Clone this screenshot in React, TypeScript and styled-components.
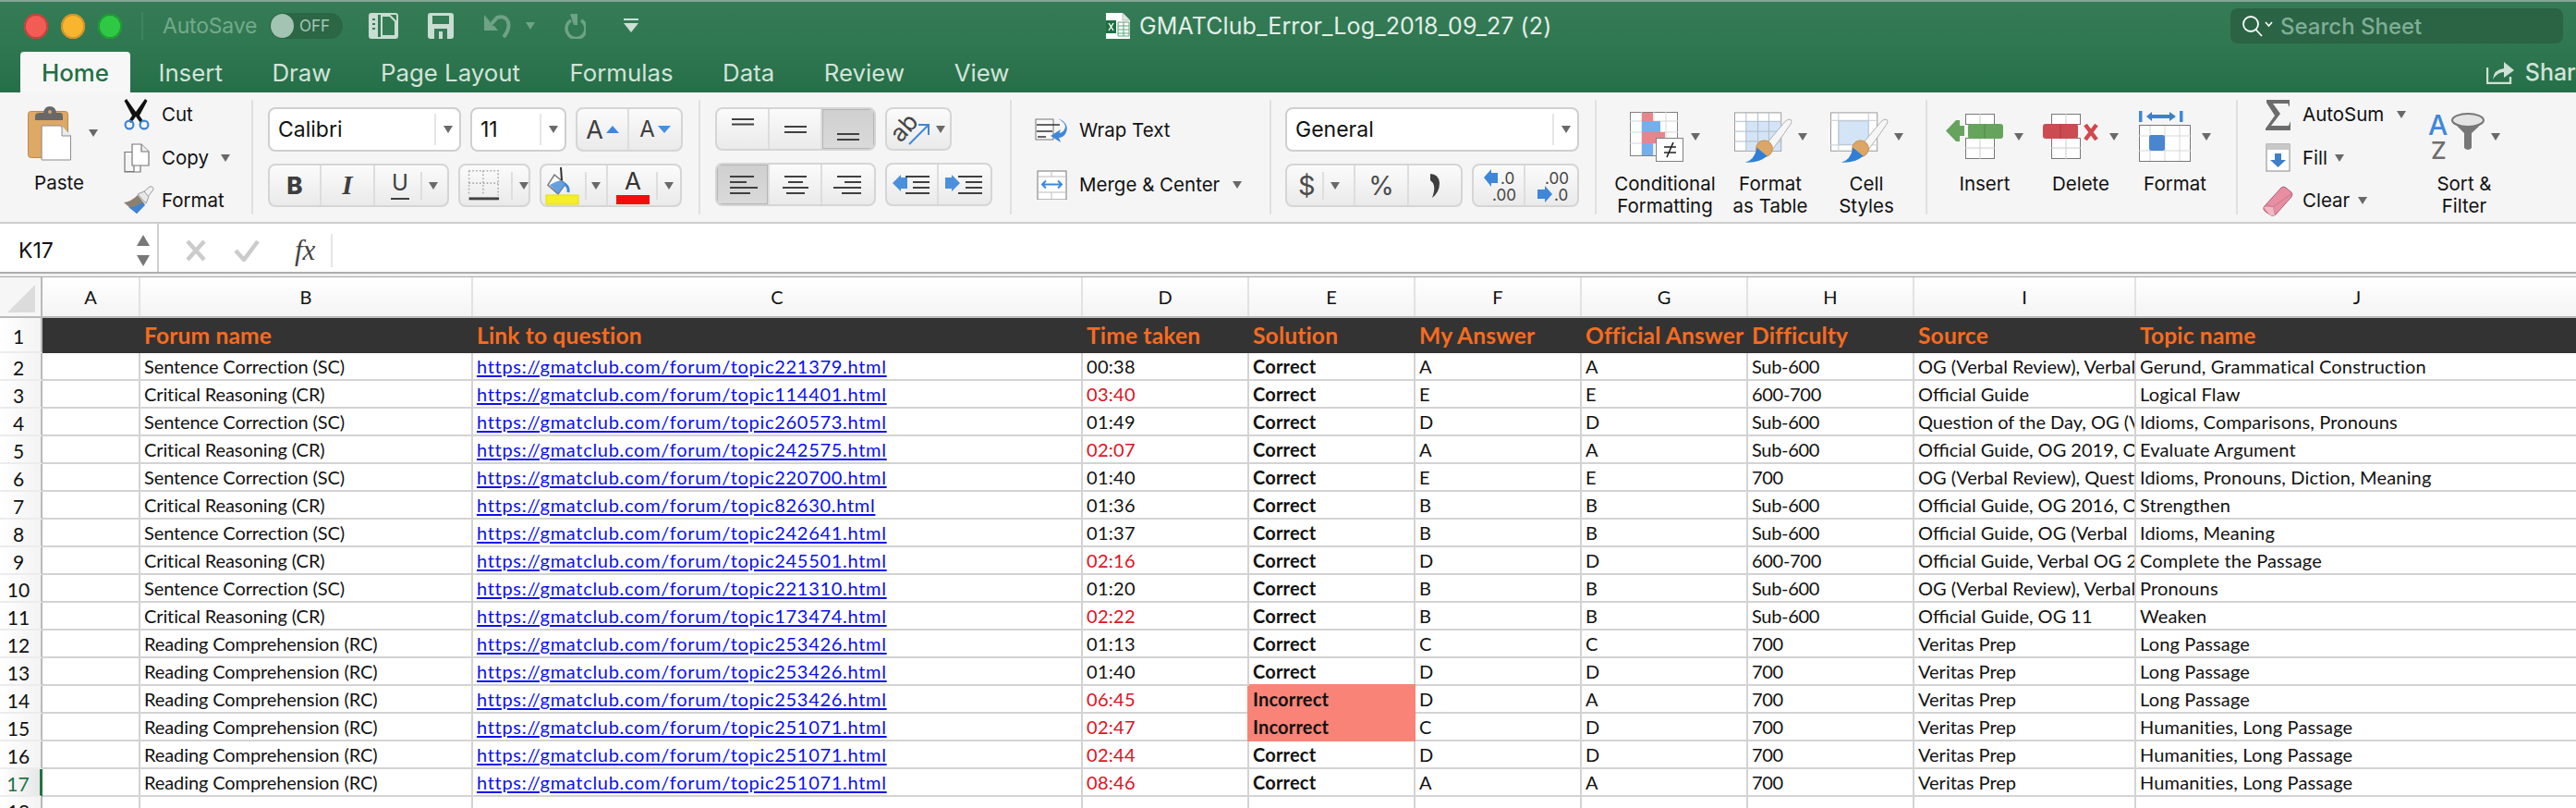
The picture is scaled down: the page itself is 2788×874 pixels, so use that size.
import React from "react";
import styled, { createGlobalStyle, css } from "styled-components";

const UI = `Inter, "Noto Sans", "Liberation Sans", sans-serif`;
const SHEET = `Lato, Carlito, "Open Sans", "Liberation Sans", sans-serif`;

const Global = createGlobalStyle`
  html, body { margin: 0; padding: 0; background: #fff; }
  * { box-sizing: border-box; }
`;

const Window = styled.div`
  width: 2788px; height: 874px; overflow: hidden; display: flex; flex-direction: column;
  font-family: ${UI}; background: #fff;
`;

/* ---------- title bar ---------- */
const TitleBar = styled.header`
  flex: 0 0 100px; display: flex; flex-direction: column;
  background: linear-gradient(180deg, #357c56 0%, #2f7750 50%, #256f48 100%);
  border-top: 2px solid #84a693;
`;
const TopRow = styled.div`
  flex: 0 0 54px; display: flex; align-items: center; padding: 0 14px 2px 26px;
`;
const Light = styled.span<{ $c: string; $r: string }>`
  width: 26px; height: 27px; border-radius: 50%; margin-right: 14px; flex: none;
  background: ${p => p.$c}; box-shadow: inset 0 0 0 2px ${p => p.$r};
`;
const TopDivider = styled.span`width: 2px; height: 30px; background: #3f8460; margin: 0 21px 0 7px;`;
const AutoSave = styled.span`font-size: 23px; color: #74a98c; width: 116px; flex: none; letter-spacing: -0.2px;`;
const Toggle = styled.span`
  width: 79px; height: 28px; border-radius: 14px; background: #2b6645; flex: none;
  display: flex; align-items: center; gap: 6px; padding-left: 1px; margin-right: 28px;
  color: #a7c6b5; font-size: 17px;
`;
const Knob = styled.span`width: 25px; height: 26px; border-radius: 50%; background: #a3c4b2;`;
const TopIcon = styled.span<{ $gap?: number }>`
  display: flex; flex: none; margin-right: ${p => p.$gap ?? 0}px;
`;
const TitleWrap = styled.div`
  display: flex; align-items: center; gap: 9px; flex: none; margin-left: 505px;
  color: #e3eee8; font-size: 25px; letter-spacing: 0.1px;
`;
const Search = styled.div`
  margin-left: auto; width: 360px; height: 38px; border-radius: 8px; background: #2a6444; flex: none;
  display: flex; align-items: center; padding-left: 12px; gap: 8px;
  color: #7fae96; font-size: 24px; font-weight: 500;
`;
const TabRow = styled.nav`flex: 1; display: flex; align-items: stretch; padding-left: 22px; gap: 7.6px;`;
const Tab = styled.div<{ $on?: boolean }>`
  padding: 0 23px; display: flex; align-items: center; font-size: 25.8px; white-space: nowrap;
  color: ${p => (p.$on ? "#1f7044" : "#d3e3da")};
  font-weight: ${p => (p.$on ? 500 : 400)};
  ${p => p.$on && css`background: #f7f7f7; border-radius: 4px 4px 0 0;`}
`;
const Share = styled.div`
  margin-left: auto; display: flex; align-items: center; gap: 11px; color: #d3e3da; flex: none;
  font-size: 25px; font-weight: 500; white-space: nowrap; margin-right: -14px;
`;

/* ---------- ribbon ---------- */
const Ribbon = styled.section`
  flex: 0 0 142px; display: flex; padding-top: 8px;
  background: #f5f5f5; border-bottom: 2px solid #cdcdcd;
`;
const Group = styled.div<{ $w: number; $pl: number; $sep?: boolean }>`
  flex: 0 0 ${p => p.$w}px; height: 124px; padding-left: ${p => p.$pl}px; display: flex;
  border-right: ${p => (p.$sep === false ? "none" : "2px solid #e0e0e0")};
`;
const Stack = styled.div`display: flex; flex-direction: column; gap: 13px; padding-top: 8px;`;
const CtlRow = styled.div`display: flex; gap: 10px;`;
const Label = styled.span`font-size: 20.5px; line-height: 24px; color: #111; white-space: nowrap;`;
const Caret = styled.span<{ $ml?: number; $c?: string }>`
  flex: none; width: 0; height: 0; margin-left: ${p => p.$ml ?? 0}px;
  border-left: 5px solid transparent; border-right: 5px solid transparent;
  border-top: 8px solid ${p => p.$c ?? "#696969"};
`;
const PasteCol = styled.div`
  width: 76px; flex: none; display: flex; flex-direction: column; align-items: center; padding-top: 6px;
`;
const PasteIconRow = styled.div`align-self: flex-start; display: flex; align-items: center; gap: 18px; height: 60px; margin-bottom: 12px; flex: none;`;
const ToolCol = styled.div<{ $ml: number; $w?: number }>`
  display: flex; flex-direction: column; gap: 14.5px; margin-left: ${p => p.$ml}px;
  ${p => p.$w && css`width: ${p.$w}px; flex: none;`}
`;
const ToolRow = styled.div`display: flex; align-items: center; height: 32px; flex: none;`;
const ToolIcon = styled.span<{ $w?: number; $ml?: number }>`
  width: ${p => p.$w ?? 42}px; margin-left: ${p => p.$ml ?? 0}px; height: 32px; display: flex; align-items: center; flex: none;
`;
const SelectBox = styled.div<{ $w: number }>`
  width: ${p => p.$w}px; height: 48px; background: #fff; border: 2px solid #cfcfcf; border-radius: 8px;
  display: flex; align-items: center; padding-left: 9px; font-size: 23px; color: #111; flex: none;
`;
const SelectValue = styled.span`flex: 1;`;
const Divider = styled.span`width: 2px; height: 34px; background: #e5e5e5; flex: none;`;
const SelectEnd = styled.span`display: flex; align-items: center; padding-right: 7px; gap: 8px;`;
const SegGroup = styled.div<{ $h?: number }>`
  display: flex; height: ${p => p.$h ?? 47}px; flex: none; border: 2px solid #d5d5d5; border-radius: 8px;
  overflow: hidden; background: linear-gradient(180deg, #fbfbfb 0%, #eaeaea 100%);
`;
const Seg = styled.div<{ $w: number; $on?: boolean }>`
  width: ${p => p.$w}px; flex: none; display: flex; align-items: center; justify-content: center;
  border-right: 2px solid #dddddd; color: #404040;
  &:last-child { border-right: none; }
  ${p => p.$on && css`background: linear-gradient(180deg,#cfcfcf,#dadada); box-shadow: inset 0 0 0 1px #b5b5b5;`}
`;
const SplitSeg = styled(Seg)<{ $gap?: number }>`justify-content: flex-start; gap: ${p => p.$gap ?? 7}px;`;
const ThinDivider = styled.span<{ $ml?: number }>`width: 2px; height: 30px; background: #dedede; flex: none; margin-left: ${p => p.$ml ?? 0}px;`;
const GlyphBold = styled.span`font-size: 26px; font-weight: 800; color: #3e3e3e;`;
const GlyphItalic = styled.span`font-family: "Liberation Serif", serif; font-style: italic; font-weight: 700; font-size: 29px; color: #3e3e3e;`;
const GlyphUnder = styled.span`
  font-size: 24px; color: #3e3e3e; width: 20px; text-align: center; line-height: 26px; margin-left: 17px;
  border-bottom: 2px solid #3e3e3e; padding-bottom: 3px; flex: none;
`;
const GrowA = styled.span<{ $s: number }>`font-size: ${p => p.$s}px; color: #3e3e3e; line-height: 1;`;
const Tri = styled.span<{ $down?: boolean }>`
  width: 0; height: 0; margin-left: 3px; border-left: 7px solid transparent; border-right: 7px solid transparent;
  ${p => (p.$down ? "border-top: 8px solid #4a90dc;" : "border-bottom: 8px solid #3f87d8;")}
`;
const ColorA = styled.span`
  display: flex; flex-direction: column; align-items: center; width: 36px; margin-left: 9px; flex: none;
  font-size: 26px; line-height: 30px; color: #333;
`;
const Swatch = styled.span<{ $c: string }>`width: 36px; height: 10px; background: ${p => p.$c}; display: block;`;
const MoneyGlyph = styled.span`font-size: 29px; color: #4a4a4a; margin-left: 12px;`;
const PercentGlyph = styled.span`font-size: 28px; color: #4a4a4a;`;
const WrapCol = styled.div`display: flex; flex-direction: column; gap: 27px; padding-top: 17px;`;
const WrapRow = styled.div`display: flex; align-items: center; height: 32px;`;
const WrapIcon = styled.span<{ $pl?: number }>`width: 48px; height: 32px; display: flex; align-items: center; flex: none; padding-left: ${p => p.$pl ?? 0}px;`;
const BigBtn = styled.div<{ $w: number }>`
  width: ${p => p.$w}px; flex: none; display: flex; flex-direction: column; align-items: center; padding-top: 12px;
`;
const BigIconRow = styled.div<{ $gap: number }>`
  height: 56px; margin-bottom: 11px; display: flex; align-items: center; gap: ${p => p.$gap}px; flex: none;
`;
const BigLabel = styled(Label)`text-align: center; white-space: pre-line; display: block; flex: none;`;
const IconText = styled.text`font-family: ${UI};`;

/* ---------- formula bar ---------- */
const FormulaBar = styled.div`flex: 0 0 52px; display: flex; align-items: stretch; background: #fff;`;
const NameBox = styled.div`
  width: 172px; flex: none; display: flex; align-items: center; justify-content: space-between;
  padding: 6px 8px 0 20px; font-size: 23px; color: #111; border-right: 2px solid #cfcfcf;
`;
const Spinner = styled.span`display: flex; flex-direction: column; gap: 10px;`;
const SpinTri = styled.span<{ $down?: boolean }>`
  width: 0; height: 0; border-left: 7px solid transparent; border-right: 7px solid transparent;
  ${p => (p.$down ? "border-top: 12px solid #777;" : "border-bottom: 12px solid #777;")}
`;
const FormulaTools = styled.div`display: flex; align-items: center; padding: 6px 0 0 29px; gap: 30px;`;
const Fx = styled.span`font-family: "Liberation Serif", serif; font-style: italic; font-size: 31px; color: #444; margin-left: 8px;`;
const FxDivider = styled.span`width: 2px; height: 36px; background: #e6e6e6; margin-left: -13px;`;
const BarGap = styled.div`flex: 0 0 6px; background: #f0f0f0; border-top: 2px solid #adadad; border-bottom: 1px solid #a9a9a9;`;

/* ---------- sheet ---------- */
const columns = css`
  display: grid;
  grid-template-columns: 46px 106px 360px 660px 180px 180px 180px 180px 180px 240px 480px;
`;
const HeaderRow = styled.div`
  ${columns}; height: 44px; flex: none; border-bottom: 2px solid #b9b9b9;
  background: linear-gradient(180deg, #ffffff 0%, #f4f4f4 100%);
`;
const ColHead = styled.div`
  display: flex; align-items: center; justify-content: center; font-family: ${SHEET}; font-size: 20px; color: #111;
  border-right: 2px solid #e2e2e2;
`;
const Corner = styled.div`
  background: #f6f6f6; border-right: 2px solid #b9b9b9; display: flex; align-items: flex-end; justify-content: flex-end;
  padding: 0 6px 4px 0;
`;
const Row = styled.div<{ $head?: boolean }>`
  ${columns}; height: ${p => (p.$head ? 38 : 30)}px; flex: none;
`;
const RowNum = styled.div<{ $sel?: boolean }>`
  display: flex; align-items: center; justify-content: center; padding: 2px 4px 0 0;
  font-family: ${SHEET}; font-size: 21px;
  color: ${p => (p.$sel ? "#217346" : "#111")};
  background: linear-gradient(90deg, #ffffff, ${p => (p.$sel ? "#e7e7e7" : "#f3f3f3")});
  border-right: ${p => (p.$sel ? "3px solid #217346" : "2px solid #b9b9b9")};
  border-bottom: 2px solid #ececec;
`;
const Cell = styled.div<{ $bold?: boolean; $color?: string; $fill?: string; $first?: boolean; $ls?: number }>`
  font-family: ${SHEET}; font-size: 20px; line-height: 28px; white-space: nowrap; overflow: hidden;
  padding-left: 4px; letter-spacing: ${p => p.$ls ?? 0}px;
  color: ${p => p.$color ?? "#111"}; font-weight: ${p => (p.$bold ? 700 : 400)};
  border-right: 2px solid #d3d3d3; border-bottom: 2px solid #d3d3d3;
  ${p => p.$fill && css`background: ${p.$fill}; border-color: ${p.$fill}; box-shadow: -2px 0 0 ${p.$fill} ${p.$first ? `, 0 -2px 0 ${p.$fill}` : ""};`}
`;
const HeadCell = styled.div`
  background: #333; color: #f76b1f; font-family: ${SHEET}; font-size: 24.6px; font-weight: 700; white-space: nowrap;
  line-height: 37px; padding-left: 4px; letter-spacing: 0.15px;
`;
const Link = styled.a`color: #0a0ff0; text-decoration: underline; text-decoration-thickness: 2px; text-underline-offset: 2px;`;

/* ---------- icons ---------- */
const PasteIcon = () => (
  <svg width="52" height="60" viewBox="0 0 52 60">
    <rect x="4.5" y="6.5" width="43" height="50" rx="3" fill="#dea865" stroke="#b98a50" />
    <path d="M12 16 V12 Q12 8 17 8 H21 Q22 1 28 1 Q34 1 35 8 H39 Q42 8 42 12 V16 Z" fill="#686868" />
    <circle cx="28" cy="7" r="2" fill="#cfa56d" />
    <path d="M20 22 H41 L52 33 V59 H20 Z" fill="#fff" stroke="#8a8a8a" strokeWidth="1" transform="translate(-.5 0) scale(.98 1)" />
    <path d="M41 22 V33 H51" fill="#ececec" stroke="#8a8a8a" strokeWidth="1" />
  </svg>
);
const ScissorsIcon = () => (
  <svg width="32" height="34" viewBox="0 0 32 34">
    <path d="M4 0 L14 14 L24 0 L26.5 2 L18 18 L22 24 L19 26 L14 19 L9 26 L6 24 L10 18 L1.5 2 Z" fill="#111" />
    <circle cx="7" cy="28" r="4.4" fill="none" stroke="#3c84d6" strokeWidth="2.2" />
    <circle cx="23" cy="28" r="4.4" fill="none" stroke="#3c84d6" strokeWidth="2.2" />
  </svg>
);
const CopyIcon = () => (
  <svg width="30" height="32" viewBox="0 0 30 32">
    <path d="M2 9.5 H12 V30.5 H2 Z M2 9.5 V31 H19 V21" fill="#fff" stroke="#777" strokeWidth="1.2" />
    <path d="M10 1 H20 L28 9 V24 H10 Z" fill="#fff" stroke="#777" strokeWidth="1.2" />
    <path d="M20 1 V9 H28" fill="#ececec" stroke="#777" strokeWidth="1.2" />
  </svg>
);
const PainterIcon = () => (
  <svg width="34" height="32" viewBox="0 0 34 32">
    <path d="M22 7 L29 1 Q33 0 33 4 L27 12 Z" fill="#f1f1f1" stroke="#9a9a9a" />
    <path d="M16 9 L23 6 L28 12 L25 19 Z" fill="#e8e8e8" stroke="#999" />
    <path d="M16 10 L24 20 L15 30 L1 18 Q9 17 16 10 Z" fill="#8d8071" />
    <path d="M6 23 L15 30 L24 21 L20 18 Q13 24 6 23 Z" fill="#3f84d4" />
  </svg>
);
const LineIcon = ({ rows }: { rows: number[][] }) => (
  <svg width="54" height="43" viewBox="0 0 54 43">
    {rows.map(([x, y, w], i) => <rect key={i} x={x} y={y} width={w} height="2" fill="#404040" />)}
  </svg>
);
const BordersIcon = () => (
  <svg width="46" height="40" viewBox="0 0 46 40">
    <g fill="none" stroke="#a5a5a5" strokeWidth="1.6" strokeDasharray="1.6 2.4">
      <path d="M10 3 H43 V31 M10 3 V31 M26 3 V31 M10 17 H43" />
    </g>
    <rect x="10" y="33" width="34" height="3" fill="#404040" />
  </svg>
);
const FillIcon = () => (
  <svg width="42" height="42" viewBox="0 0 42 42">
    <path d="M14 9 L26 19 L18 30 L7 20 Z" fill="#fff" stroke="#777" strokeWidth="1.5" />
    <path d="M9 20 Q16 16 21 15 L26 19 L18 30 Z" fill="#4a90dc" opacity=".85" />
    <path d="M25 19 Q30 22 29 28" stroke="#3f87d8" strokeWidth="3" fill="none" />
    <path d="M21 1 L22 15" stroke="#333" strokeWidth="2" />
    <rect x="5" y="31" width="35" height="10" fill="#f5ee2a" stroke="#e6dd00" />
  </svg>
);
const OrientIcon = () => (
  <svg width="46" height="43" viewBox="0 0 46 43">
    <IconText x="0" y="0" fontSize="26" fill="#444" textAnchor="middle" transform="translate(25 26) rotate(-48)">ab</IconText>
    <path d="M24 38 L44 18 M34 17 H45 V28" stroke="#3f87d8" strokeWidth="2" fill="none" />
  </svg>
);
const WrapTextIcon = () => (
  <svg width="40" height="30" viewBox="0 0 40 30">
    <rect x="1" y="3" width="19" height="22" fill="#fbfbfb" stroke="#777" />
    <path d="M2 9 H27 M2 16 H19 M3 22 H12" stroke="#333" strokeWidth="1.6" />
    <path d="M25 2 Q39 8 33 19 Q30 23 26 23 L28 28 L17 21 L28 14 L26.5 18 Q32 17 33 11 Q33 7 25 2 Z" fill="#3f87d8" />
  </svg>
);
const MergeIcon = () => (
  <svg width="36" height="32" viewBox="0 0 36 32">
    <rect x="1" y="1" width="31" height="31" fill="#fff" stroke="#777" />
    <path d="M1 7 H32 M16 1 V7 M1 24 H32 M16 24 V32" stroke="#bbb" />
    <path d="M6 15.5 H27 M10 11.5 L6 15.5 L10 19.5 M23 11.5 L27 15.5 L23 19.5" stroke="#3f87d8" strokeWidth="2" fill="none" />
  </svg>
);
const IndentIcon = ({ dir }: { dir: "dec" | "inc" }) => (
  <svg width="54" height="43" viewBox="0 0 54 43">
    {dir === "dec"
      ? <path d="M6 20 L15 11 V14 H22 V26 H15 V29 Z" fill="#4a90dc" />
      : <path d="M22 20 L13 11 V14 H6 V26 H13 V29 Z" fill="#4a90dc" />}
    <rect x="20" y="12" width="26" height="2" fill="#404040" />
    <rect x="28" y="18" width="18" height="2" fill="#404040" />
    <rect x="28" y="24" width="18" height="2" fill="#404040" />
    <rect x="20" y="30" width="26" height="2" fill="#404040" />
  </svg>
);
const CommaIcon = () => (
  <svg width="16" height="28" viewBox="0 0 16 28">
    <path d="M3 1 Q12 1 13 11 Q13 21 5 27 Q8 19 7 14 Q6 10 3 8 Z" fill="#3e3e3e" />
  </svg>
);
const DecIcon = ({ dir }: { dir: "inc" | "dec" }) => (
  <svg width="54" height="43" viewBox="0 0 54 43">
    {dir === "inc" ? (
      <>
        <path d="M11 13 L19 4 V8 H26 V19 H19 V23 Z" fill="#3f87d8" />
        <IconText x="29" y="20" fontSize="17" fill="#444">.0</IconText>
        <IconText x="20" y="38" fontSize="17" fill="#444">.00</IconText>
      </>
    ) : (
      <>
        <IconText x="20" y="20" fontSize="17" fill="#444">.00</IconText>
        <path d="M28 31 L20 22 V26 H12 V36 H20 V40 Z" fill="#3f87d8" />
        <IconText x="30" y="38" fontSize="17" fill="#444">.0</IconText>
      </>
    )}
  </svg>
);
const CondIcon = () => (
  <svg width="58" height="54" viewBox="0 0 58 54">
    <rect x=".5" y=".5" width="51" height="47" fill="#fff" stroke="#808080" />
    <path d="M13 0 V47 M26 0 V47 M39 0 V47 M0 10 H52 M0 22 H52 M0 34 H52" stroke="#d5d5d5" />
    <rect x="13" y="1" width="12" height="10" fill="#e6858b" />
    <rect x="13" y="10" width="20" height="12" fill="#74afeb" />
    <rect x="13" y="22" width="25" height="12" fill="#e6858b" />
    <rect x="13" y="34" width="12" height="13" fill="#74afeb" />
    <rect x="28.5" y="28.5" width="29" height="25" fill="#fff" stroke="#808080" />
    <path d="M37 38 H50 M37 44 H50 M40 49 L47 33" stroke="#222" strokeWidth="1.6" />
  </svg>
);
const Brush = () => (
  <>
    <path d="M62 9 Q59 8 56 11 L35 36 L41 43 Q46 37 62 14 Q64 11 62 9 Z" fill="#f6f6f6" stroke="#aeaeae" />
    <circle cx="33" cy="41" r="9" fill="#dca766" stroke="#c08a48" />
    <path d="M12 56 Q22 54 25 40 L36 49 Q27 57 12 56 Z" fill="#2f7fd6" />
  </>
);
const TableStyleIcon = () => (
  <svg width="63" height="57" viewBox="0 0 64 57">
    <rect x=".5" y="1.5" width="51" height="42" fill="#fff" stroke="#9a9a9a" />
    <rect x="13" y="11" width="38" height="32" fill="#d3e4f6" />
    <path d="M13 1 V44 M26 1 V44 M38 1 V44 M0 11 H52 M0 22 H52 M0 33 H52" stroke="#aebbc8" />
    <Brush />
  </svg>
);
const CellStyleIcon = () => (
  <svg width="63" height="57" viewBox="0 0 64 57">
    <rect x=".5" y="1.5" width="51" height="42" fill="#fff" stroke="#9a9a9a" />
    <rect x="9" y="10.5" width="33" height="26" fill="#d3e4f6" stroke="#aebbc8" />
    <path d="M9 1 V44 M42 1 V44 M0 10 H52 M0 37 H52" stroke="#c4cbd2" />
    <Brush />
  </svg>
);
const InsertIcon = () => (
  <svg width="62" height="50" viewBox="0 0 62 50">
    <rect x="21.5" y=".5" width="31" height="11" fill="#fff" stroke="#777" />
    <rect x="21.5" y="26.5" width="31" height="22" fill="#fff" stroke="#777" />
    <path d="M37 0 V11 M37 27 V49 M21 37 H53" stroke="#ccc" />
    <rect x="24" y="11" width="38" height="16" rx="3" fill="#66a45e" />
    <path d="M42 11 V27" stroke="#4d8a45" />
    <path d="M0 18.5 L11 7 H15 V13 H20 V24 H15 V30 H11 Z" fill="#66a45e" />
  </svg>
);
const DeleteIcon = () => (
  <svg width="60" height="50" viewBox="0 0 60 50">
    <rect x="9.5" y=".5" width="31" height="11" fill="#fff" stroke="#777" />
    <rect x="9.5" y="26.5" width="31" height="22" fill="#fff" stroke="#777" />
    <path d="M25 0 V11 M25 27 V49 M9 37 H41" stroke="#ccc" />
    <rect x="0" y="11" width="38" height="16" rx="3" fill="#cb4b53" />
    <path d="M19 11 V27" stroke="#a83a42" />
    <path d="M46 12 L58 28 M58 12 L46 28" stroke="#d2474e" strokeWidth="4.5" />
  </svg>
);
const FormatCellsIcon = () => (
  <svg width="57" height="56" viewBox="0 0 57 56">
    <rect x="0" y="0" width="3.5" height="12" fill="#3f87d8" />
    <rect x="44" y="0" width="3.5" height="12" fill="#3f87d8" />
    <path d="M8 6 L14 1 V4 H33 V1 L40 6 L33 11 V8 H14 V11 Z" fill="#3f7fc8" />
    <rect x=".5" y="15.5" width="55" height="39" fill="#fff" stroke="#777" />
    <path d="M12 16 V54 M44 16 V54 M0 27 H56 M0 43 H56 M28 16 V54" stroke="#d7d7d7" />
    <rect x="11" y="26" width="17" height="17" rx="2.5" fill="#4a86cf" />
  </svg>
);
const SigmaIcon = () => (
  <svg width="28" height="33" viewBox="0 0 28 33">
    <path d="M1 0 H26 V8 L24 4 H8 L16 15 L6 28 H25 L27 23 V33 H0 V31 L10 17 L1 3 Z" fill="#6c6c6c" />
  </svg>
);
const FillDownIcon = () => (
  <svg width="28" height="32" viewBox="0 0 28 32">
    <rect x="1" y="1" width="25" height="29" fill="#fff" stroke="#888" />
    <rect x="1" y="1" width="25" height="6" fill="#c8c8c8" />
    <path d="M10 11 H17 V18 H22 L13.5 26 L5 18 H10 Z" fill="#3f7fc8" />
  </svg>
);
const EraserIcon = () => (
  <svg width="34" height="33" viewBox="0 0 34 33">
    <path d="M1 23 L20 2 Q22 0 25 2 L31 7 Q33 9 31 12 L14 31 Q12 33 9 32 L3 28 Q0 26 1 23 Z" fill="#e78ea2" stroke="#b75a70" />
    <path d="M4 20 L11 23 L13 32 M11 23 L32 8" stroke="#c8758a" fill="none" />
    <path d="M1 23 L11 23 L13 32 L8 32 Z" fill="#f1b9c5" />
  </svg>
);
const SortIcon = () => (
  <svg width="63" height="52" viewBox="0 0 63 52">
    <IconText x="0" y="24" fontSize="30" fontWeight="500" fill="#3f87d8">A</IconText>
    <IconText x="3" y="50" fontSize="26" fontWeight="500" fill="#6d6d6d">Z</IconText>
    <ellipse cx="43" cy="8" rx="17" ry="7" fill="#e4e4e4" stroke="#777" strokeWidth="2" />
    <path d="M26 9 Q33 16 39 22 V38 Q43 42 47 38 V22 Q54 16 60 9 Q43 20 26 9 Z" fill="#777" />
  </svg>
);
const SheetSplitIcon = () => (
  <svg width="32" height="28" viewBox="0 0 32 28">
    <rect x="1" y="1" width="30" height="26" rx="2" fill="none" stroke="#c9ddd2" strokeWidth="2" />
    <rect x="1" y="1" width="9" height="26" fill="#c9ddd2" />
    <path d="M14 3 H23 L29 9 V25 H14 Z" fill="#357c56" stroke="#c9ddd2" strokeWidth="2" />
    <path d="M4 7 H7 M4 12 H7 M4 17 H7" stroke="#357c56" strokeWidth="2" />
  </svg>
);
const SaveIcon = () => (
  <svg width="28" height="28" viewBox="0 0 28 28">
    <path d="M3 0 H25 Q28 0 28 3 V25 Q28 28 25 28 H3 Q0 28 0 25 V3 Q0 0 3 0 Z" fill="#c9ddd2" />
    <rect x="5" y="3" width="18" height="9" fill="#357c56" />
    <rect x="7" y="17" width="14" height="11" fill="#357c56" />
    <rect x="12" y="20" width="4" height="8" fill="#c9ddd2" />
  </svg>
);
const UndoIcon = () => (
  <svg width="32" height="26" viewBox="0 0 32 26">
    <path d="M1 1 V18 H16 L12 13 L7 13 V8 Z" fill="#6fa287" />
    <path d="M7 13 L15 4 Q24 1 27 9 Q29 17 22 25" fill="none" stroke="#6fa287" strokeWidth="4" />
  </svg>
);
const RedoIcon = () => (
  <svg width="26" height="28" viewBox="0 0 26 28">
    <path d="M10 8 A10.5 10.5 0 1 0 21 8" fill="none" stroke="#6fa287" strokeWidth="3.5" />
    <path d="M9 1 L17 1 L17 13 L13 13 Z" fill="#6fa287" />
  </svg>
);
const CustomizeIcon = () => (
  <svg width="16" height="16" viewBox="0 0 16 16">
    <rect x="0" y="0" width="16" height="2" fill="#cfe0d6" />
    <path d="M0 5 H16 L8 15 Z" fill="#cfe0d6" />
  </svg>
);
const XlsxIcon = () => (
  <svg width="28" height="30" viewBox="0 0 28 30">
    <path d="M1 1 H19 L27 9 V29 H1 Z" fill="#fff" />
    <path d="M19 1 V9 H27" fill="#dce8e1" stroke="#888" strokeWidth=".5" />
    <rect x="1" y="9" width="11" height="14" fill="#1e6e42" />
    <path d="M4 12 L9 20 M9 12 L4 20" stroke="#fff" strokeWidth="1.4" />
    <path d="M14 11 H26 V26 H14 Z M14 15 H26 M14 19 H26 M14 23 H26 M20 11 V26" fill="none" stroke="#5aa37a" />
  </svg>
);
const SearchIcon = () => (
  <svg width="34" height="24" viewBox="0 0 34 24">
    <circle cx="10" cy="10" r="8" fill="none" stroke="#fff" strokeWidth="1.8" />
    <path d="M15.5 16 L22 23" stroke="#fff" strokeWidth="1.8" />
    <path d="M26 8 L29.5 12 L33 8" fill="none" stroke="#fff" strokeWidth="1.6" />
  </svg>
);
const ShareIcon = () => (
  <svg width="31" height="26" viewBox="0 0 31 26">
    <path d="M1 8 V25 H26 V18" fill="none" stroke="#cfe0d6" strokeWidth="2.4" />
    <path d="M7 21 Q8 10 19 9 V2 L30 11 L19 19 V13 Q12 13 7 21 Z" fill="#cfe0d6" />
  </svg>
);
const CrossIcon = () => (
  <svg width="22" height="24" viewBox="0 0 22 24"><path d="M2 2 L20 22 M20 2 L2 22" stroke="#cbcbcb" strokeWidth="4.5" /></svg>
);
const CheckIcon = () => (
  <svg width="28" height="24" viewBox="0 0 28 24"><path d="M2 12 L11 22 L26 2" fill="none" stroke="#cbcbcb" strokeWidth="4.5" /></svg>
);
const CornerTri = () => (
  <svg width="30" height="30" viewBox="0 0 30 30"><path d="M30 0 V30 H0 Z" fill="#dcdcdc" /></svg>
);

/* ---------- data ---------- */
const SC = "Sentence Correction (SC)";
const CR = "Critical Reasoning (CR)";
const RC = "Reading Comprehension (RC)";
const VP = "Veritas Prep";
const LP = "Long Passage";
const HLP = "Humanities, Long Passage";
type R = [string, string, string, string, string, string, string, string, string];
const rows: R[] = [
  [SC, "topic221379", "00:38", "Correct", "A", "A", "Sub-600", "OG (Verbal Review), Verbal", "Gerund, Grammatical Construction"],
  [CR, "topic114401", "03:40", "Correct", "E", "E", "600-700", "Official Guide", "Logical Flaw"],
  [SC, "topic260573", "01:49", "Correct", "D", "D", "Sub-600", "Question of the Day, OG (Verbal", "Idioms, Comparisons, Pronouns"],
  [CR, "topic242575", "02:07", "Correct", "A", "A", "Sub-600", "Official Guide, OG 2019, OG", "Evaluate Argument"],
  [SC, "topic220700", "01:40", "Correct", "E", "E", "700", "OG (Verbal Review), Question", "Idioms, Pronouns, Diction, Meaning"],
  [CR, "topic82630", "01:36", "Correct", "B", "B", "Sub-600", "Official Guide, OG 2016, OG", "Strengthen"],
  [SC, "topic242641", "01:37", "Correct", "B", "B", "Sub-600", "Official Guide, OG (Verbal", "Idioms, Meaning"],
  [CR, "topic245501", "02:16", "Correct", "D", "D", "600-700", "Official Guide, Verbal OG 2", "Complete the Passage"],
  [SC, "topic221310", "01:20", "Correct", "B", "B", "Sub-600", "OG (Verbal Review), Verbal", "Pronouns"],
  [CR, "topic173474", "02:22", "Correct", "B", "B", "Sub-600", "Official Guide, OG 11", "Weaken"],
  [RC, "topic253426", "01:13", "Correct", "C", "C", "700", VP, LP],
  [RC, "topic253426", "01:40", "Correct", "D", "D", "700", VP, LP],
  [RC, "topic253426", "06:45", "Incorrect", "D", "A", "700", VP, LP],
  [RC, "topic251071", "02:47", "Incorrect", "C", "D", "700", VP, HLP],
  [RC, "topic251071", "02:44", "Correct", "D", "D", "700", VP, HLP],
  [RC, "topic251071", "08:46", "Correct", "A", "A", "700", VP, HLP],
];
const redTimes = new Set(["03:40", "02:07", "02:16", "02:22", "06:45", "02:47", "02:44", "08:46"]);
const heads = ["Forum name", "Link to question", "Time taken", "Solution", "My Answer", "Official Answer", "Difficulty", "Source", "Topic name"];
const letters = "ABCDEFGHIJ".split("");

const tabs = ["Insert", "Draw", "Page Layout", "Formulas", "Data", "Review", "View"];

export default function App() {
  return (
    <Window>
      <Global />
      <TitleBar>
        <TopRow>
          <Light $c="#f25c55" $r="#c8403a" />
          <Light $c="#f9b52d" $r="#d3922a" />
          <Light $c="#2fc845" $r="#1f9a33" />
          <TopDivider />
          <AutoSave>AutoSave</AutoSave>
          <Toggle><Knob />OFF</Toggle>
          <TopIcon $gap={32}><SheetSplitIcon /></TopIcon>
          <TopIcon $gap={32}><SaveIcon /></TopIcon>
          <TopIcon $gap={14}><UndoIcon /></TopIcon>
          <TopIcon $gap={29}><Caret $c="#6fa287" /></TopIcon>
          <TopIcon $gap={41}><RedoIcon /></TopIcon>
          <TopIcon><CustomizeIcon /></TopIcon>
          <TitleWrap><XlsxIcon />GMATClub_Error_Log_2018_09_27 (2)</TitleWrap>
          <Search><SearchIcon />Search Sheet</Search>
        </TopRow>
        <TabRow>
          <Tab $on>Home</Tab>
          {tabs.map(t => <Tab key={t}>{t}</Tab>)}
          <Share><ShareIcon />Share</Share>
        </TabRow>
      </TitleBar>

      <Ribbon>
        <Group $w={274} $pl={26}>
          <PasteCol>
            <PasteIconRow><PasteIcon /><Caret /></PasteIconRow>
            <Label>Paste</Label>
          </PasteCol>
          <ToolCol $ml={31}>
            <ToolRow><ToolIcon><ScissorsIcon /></ToolIcon><Label>Cut</Label></ToolRow>
            <ToolRow><ToolIcon><CopyIcon /></ToolIcon><Label>Copy</Label><Caret $ml={13} /></ToolRow>
            <ToolRow><ToolIcon><PainterIcon /></ToolIcon><Label>Format</Label></ToolRow>
          </ToolCol>
        </Group>

        <Group $w={484} $pl={16}>
          <Stack>
            <CtlRow>
              <SelectBox $w={209}><SelectValue>Calibri</SelectValue><SelectEnd><Divider /><Caret /></SelectEnd></SelectBox>
              <SelectBox $w={104}><SelectValue>11</SelectValue><SelectEnd><Divider /><Caret /></SelectEnd></SelectBox>
              <SegGroup $h={48}>
                <Seg $w={56}><GrowA $s={27}>A</GrowA><Tri /></Seg>
                <Seg $w={56}><GrowA $s={24}>A</GrowA><Tri $down /></Seg>
              </SegGroup>
            </CtlRow>
            <CtlRow>
              <SegGroup>
                <Seg $w={56}><GlyphBold>B</GlyphBold></Seg>
                <Seg $w={58}><GlyphItalic>I</GlyphItalic></Seg>
                <SplitSeg $w={78}><GlyphUnder>U</GlyphUnder><ThinDivider $ml={5} /><Caret /></SplitSeg>
              </SegGroup>
              <SegGroup>
                <SplitSeg $w={74}><BordersIcon /><ThinDivider $ml={4} /><Caret /></SplitSeg>
              </SegGroup>
              <SegGroup>
                <SplitSeg $w={72} $gap={5}><FillIcon /><ThinDivider /><Caret /></SplitSeg>
                <SplitSeg $w={78}><ColorA>A<Swatch $c="#f20d0d" /></ColorA><ThinDivider /><Caret /></SplitSeg>
              </SegGroup>
            </CtlRow>
          </Stack>
        </Group>

        <Group $w={337} $pl={16}>
          <Stack>
            <CtlRow>
              <SegGroup>
                <Seg $w={57}><LineIcon rows={[[15, 10, 24], [15, 15.5, 24]]} /></Seg>
                <Seg $w={57}><LineIcon rows={[[15, 18, 24], [15, 24, 24]]} /></Seg>
                <Seg $w={56} $on><LineIcon rows={[[15, 26, 24], [15, 32, 24]]} /></Seg>
              </SegGroup>
              <SegGroup>
                <SplitSeg $w={68} $gap={7}><OrientIcon /><Caret /></SplitSeg>
              </SegGroup>
            </CtlRow>
            <CtlRow>
              <SegGroup>
                <Seg $w={57} $on><LineIcon rows={[[13, 12, 26], [13, 18, 18], [13, 24, 30], [13, 30, 22]]} /></Seg>
                <Seg $w={57}><LineIcon rows={[[15, 12, 24], [19, 18, 16], [13, 24, 28], [17, 30, 20]]} /></Seg>
                <Seg $w={56}><LineIcon rows={[[15, 12, 26], [23, 18, 18], [11, 24, 30], [20, 30, 21]]} /></Seg>
              </SegGroup>
              <SegGroup>
                <Seg $w={56}><IndentIcon dir="dec" /></Seg>
                <Seg $w={56}><IndentIcon dir="inc" /></Seg>
              </SegGroup>
            </CtlRow>
          </Stack>
        </Group>

        <Group $w={281} $pl={25}>
          <WrapCol>
            <WrapRow><WrapIcon><WrapTextIcon /></WrapIcon><Label>Wrap Text</Label></WrapRow>
            <WrapRow><WrapIcon $pl={2}><MergeIcon /></WrapIcon><Label>Merge &amp; Center</Label><Caret $ml={14} /></WrapRow>
          </WrapCol>
        </Group>

        <Group $w={352} $pl={15}>
          <Stack>
            <SelectBox $w={318}><SelectValue>General</SelectValue><SelectEnd><Divider /><Caret /></SelectEnd></SelectBox>
            <CtlRow>
              <SegGroup>
                <SplitSeg $w={74}><MoneyGlyph>$</MoneyGlyph><ThinDivider /><Caret /></SplitSeg>
                <Seg $w={58}><PercentGlyph>%</PercentGlyph></Seg>
                <Seg $w={56}><CommaIcon /></Seg>
              </SegGroup>
              <SegGroup>
                <Seg $w={56}><DecIcon dir="inc" /></Seg>
                <Seg $w={56}><DecIcon dir="dec" /></Seg>
              </SegGroup>
            </CtlRow>
          </Stack>
        </Group>

        <Group $w={358} $pl={16}>
          <BigBtn $w={116}>
            <BigIconRow $gap={8}><CondIcon /><Caret /></BigIconRow>
            <BigLabel>{"Conditional\nFormatting"}</BigLabel>
          </BigBtn>
          <BigBtn $w={112}>
            <BigIconRow $gap={6}><TableStyleIcon /><Caret /></BigIconRow>
            <BigLabel>{"Format\nas Table"}</BigLabel>
          </BigBtn>
          <BigBtn $w={96}>
            <BigIconRow $gap={6}><CellStyleIcon /><Caret /></BigIconRow>
            <BigLabel>{"Cell\nStyles"}</BigLabel>
          </BigBtn>
        </Group>

        <Group $w={336} $pl={10}>
          <BigBtn $w={104}>
            <BigIconRow $gap={12}><InsertIcon /><Caret /></BigIconRow>
            <BigLabel>Insert</BigLabel>
          </BigBtn>
          <BigBtn $w={104}>
            <BigIconRow $gap={12}><DeleteIcon /><Caret /></BigIconRow>
            <BigLabel>Delete</BigLabel>
          </BigBtn>
          <BigBtn $w={100}>
            <BigIconRow $gap={11}><FormatCellsIcon /><Caret /></BigIconRow>
            <BigLabel>Format</BigLabel>
          </BigBtn>
        </Group>

        <Group $w={367} $pl={30} $sep={false}>
          <ToolCol $ml={0} $w={167}>
            <ToolRow><ToolIcon $w={40}><SigmaIcon /></ToolIcon><Label>AutoSum</Label><Caret $ml={14} /></ToolRow>
            <ToolRow><ToolIcon $w={40}><FillDownIcon /></ToolIcon><Label>Fill</Label><Caret $ml={8} /></ToolRow>
            <ToolRow><ToolIcon $w={43} $ml={-3}><EraserIcon /></ToolIcon><Label>Clear</Label><Caret $ml={9} /></ToolRow>
          </ToolCol>
          <BigBtn $w={96}>
            <BigIconRow $gap={5}><SortIcon /><Caret /></BigIconRow>
            <BigLabel>{"Sort &\nFilter"}</BigLabel>
          </BigBtn>
        </Group>
      </Ribbon>

      <FormulaBar>
        <NameBox>K17<Spinner><SpinTri /><SpinTri $down /></Spinner></NameBox>
        <FormulaTools>
          <CrossIcon />
          <CheckIcon />
          <Fx>fx</Fx>
          <FxDivider />
        </FormulaTools>
      </FormulaBar>
      <BarGap />

      <HeaderRow>
        <Corner><CornerTri /></Corner>
        {letters.map(l => <ColHead key={l}>{l}</ColHead>)}
      </HeaderRow>

      <Row $head>
        <RowNum>1</RowNum>
        <HeadCell />
        {heads.map(h => <HeadCell key={h}>{h}</HeadCell>)}
      </Row>

      {rows.map((r, i) => {
        const n = i + 2;
        const wrong = r[3] === "Incorrect";
        return (
          <Row key={n}>
            <RowNum $sel={n === 17}>{n}</RowNum>
            <Cell />
            <Cell $ls={-0.1}>{r[0]}</Cell>
            <Cell $ls={0.7}><Link href={`https://gmatclub.com/forum/${r[1]}.html`}>{`https://gmatclub.com/forum/${r[1]}.html`}</Link></Cell>
            <Cell $ls={0.3} $color={redTimes.has(r[2]) ? "#e0111e" : undefined}>{r[2]}</Cell>
            <Cell $ls={0.2} $bold $fill={wrong ? "#f98376" : undefined} $first={n === 14}>{r[3]}</Cell>
            <Cell>{r[4]}</Cell>
            <Cell>{r[5]}</Cell>
            <Cell $ls={-0.3}>{r[6]}</Cell>
            <Cell $ls={0}>{r[7]}</Cell>
            <Cell $ls={0.15}>{r[8]}</Cell>
          </Row>
        );
      })}

      <Row>
        <RowNum>18</RowNum>
        {letters.map(l => <Cell key={l} />)}
      </Row>
    </Window>
  );
}
